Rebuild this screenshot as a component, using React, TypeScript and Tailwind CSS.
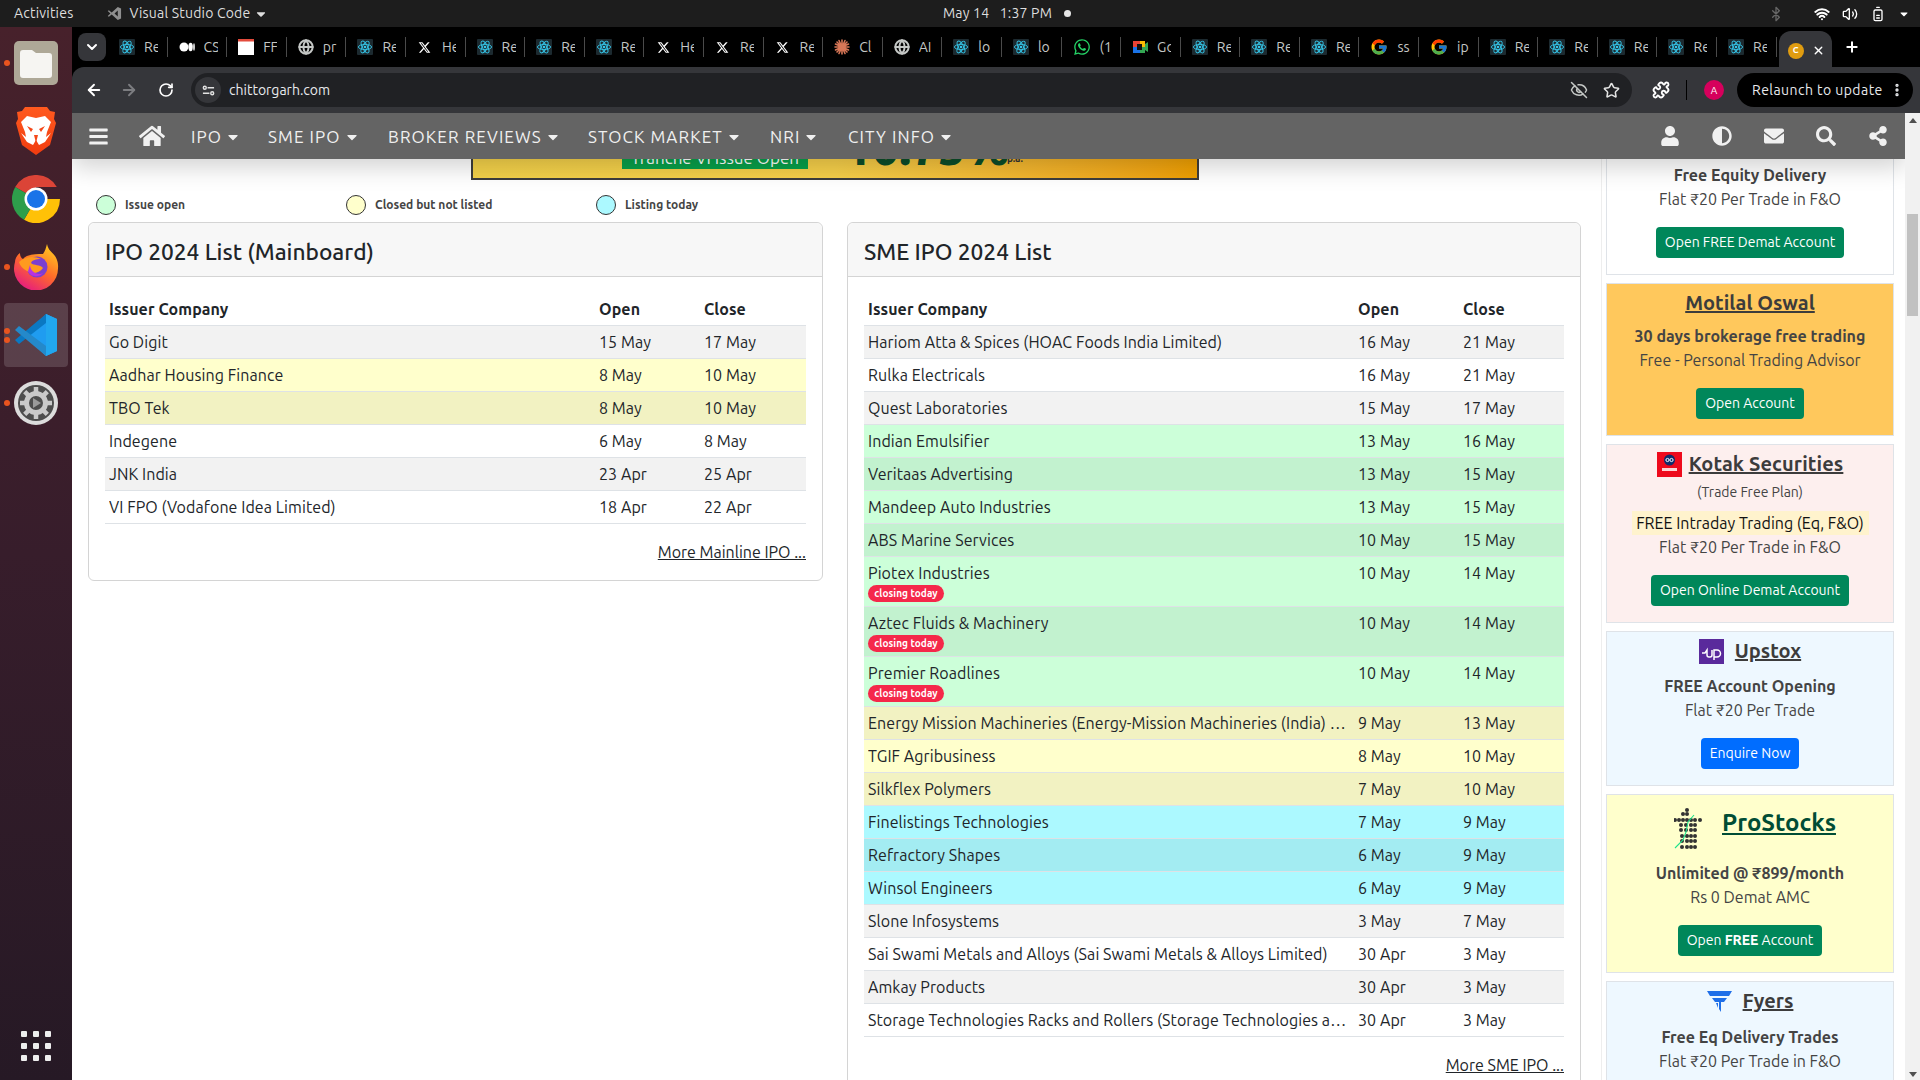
import React from 'react';
import {
  ArrowLeft, ArrowRight, RotateCw, EyeOff, Star, Puzzle, EllipsisVertical, ChevronDown, Plus, X,
  Wifi, Volume2, BatteryMedium, Bluetooth, Globe,
} from 'lucide-react';
import { FaBars, FaHome, FaUser, FaAdjust, FaEnvelope, FaSearch, FaShareAlt, FaCaretDown, FaWhatsapp } from 'react-icons/fa';
import { FcGoogle } from 'react-icons/fc';
import { FaXTwitter } from 'react-icons/fa6';

const FONT = "font-['Ubuntu','Lato','Noto_Sans',sans-serif]";

const ReactIcon = () => (
  <svg viewBox="0 0 16 16" className="w-4 h-4 shrink-0">
    <rect width="16" height="16" rx="1" fill="#1c2a30" />
    <g fill="none" stroke="#35c5e8" strokeWidth="0.9">
      <ellipse cx="8" cy="8" rx="6.6" ry="2.6" />
      <ellipse cx="8" cy="8" rx="6.6" ry="2.6" transform="rotate(60 8 8)" />
      <ellipse cx="8" cy="8" rx="6.6" ry="2.6" transform="rotate(120 8 8)" />
    </g>
    <circle cx="8" cy="8" r="1.3" fill="#35c5e8" />
  </svg>
);

const MediumIcon = () => (
  <svg viewBox="0 0 16 16" className="w-4 h-4 shrink-0" fill="#fff">
    <ellipse cx="5" cy="8" rx="4.5" ry="4.6" />
    <ellipse cx="11.6" cy="8" rx="2.2" ry="4.2" />
    <ellipse cx="15" cy="8" rx="0.8" ry="3.8" />
  </svg>
);

const CalendarIcon = () => (
  <svg viewBox="0 0 16 16" className="w-4 h-4 shrink-0">
    <rect width="16" height="16" fill="#fff" />
    <rect width="16" height="2.5" fill="#e34b3c" />
  </svg>
);

const ClaudeIcon = () => (
  <svg viewBox="0 0 16 16" className="w-4 h-4 shrink-0" stroke="#d97757" strokeWidth="1.6" strokeLinecap="round">
    <path d="M8 1v14M1 8h14M3 3l10 10M13 3L3 13M5 1.5l6 13M11 1.5l-6 13M1.5 5l13 6M14.5 5l-13 6" />
  </svg>
);

const MeetIcon = () => (
  <svg viewBox="0 0 16 16" className="w-4 h-4 shrink-0">
    <rect x="1" y="2" width="7" height="6" fill="#ea4335" />
    <rect x="8" y="2" width="5" height="6" fill="#fbbc04" />
    <rect x="1" y="8" width="7" height="6" fill="#1a73e8" />
    <rect x="8" y="8" width="5" height="6" fill="#34a853" />
    <rect x="5" y="5" width="5" height="6" fill="#111" />
    <path d="M13 5l3-2v10l-3-2z" fill="#34a853" />
  </svg>
);

type Fav = 'react' | 'medium' | 'cal' | 'globe' | 'x' | 'claude' | 'wa' | 'meet' | 'google';

const tabs: { icon: Fav; label: string }[] = [
  { icon: 'react', label: 'Re' }, { icon: 'medium', label: 'CS' }, { icon: 'cal', label: 'FF' }, { icon: 'globe', label: 'pr' },
  { icon: 'react', label: 'Re' }, { icon: 'x', label: 'He' }, { icon: 'react', label: 'Re' }, { icon: 'react', label: 'Re' },
  { icon: 'react', label: 'Re' }, { icon: 'x', label: 'He' }, { icon: 'x', label: 'Re' }, { icon: 'x', label: 'Re' },
  { icon: 'claude', label: 'Cl' }, { icon: 'globe', label: 'AI' }, { icon: 'react', label: 'lo' }, { icon: 'react', label: 'lo' },
  { icon: 'wa', label: '(1' }, { icon: 'meet', label: 'Go' }, { icon: 'react', label: 'Re' }, { icon: 'react', label: 'Re' },
  { icon: 'react', label: 'Re' }, { icon: 'google', label: 'ss' }, { icon: 'google', label: 'ip' }, { icon: 'react', label: 'Re' },
  { icon: 'react', label: 'Re' }, { icon: 'react', label: 'Re' }, { icon: 'react', label: 'Re' }, { icon: 'react', label: 'Re' },
];

const Favicon = ({ icon }: { icon: Fav }) => {
  if (icon === 'react') return <ReactIcon />;
  if (icon === 'medium') return <MediumIcon />;
  if (icon === 'cal') return <CalendarIcon />;
  if (icon === 'globe') return <Globe className="w-4 h-4 shrink-0 text-[#c4c7c5]" strokeWidth={3} />;
  if (icon === 'x') return <FaXTwitter className="w-[13px] h-[13px] mx-[1.5px] shrink-0 text-white" />;
  if (icon === 'claude') return <ClaudeIcon />;
  if (icon === 'wa') return <FaWhatsapp className="w-[18px] h-[18px] shrink-0 text-[#25d366]" />;
  if (icon === 'meet') return <MeetIcon />;
  return <FcGoogle className="w-[18px] h-[18px] shrink-0" />;
};

const FilesLogo = () => (
  <svg viewBox="0 0 44 44" className="w-11 h-11">
    <rect width="44" height="44" rx="5" fill="#aea897" />
    <path d="M6 12a3 3 0 013-3h9l4 3h13a3 3 0 013 3v19a3 3 0 01-3 3H9a3 3 0 01-3-3z" fill="#f6f5f2" />
  </svg>
);

const BraveLogo = () => (
  <svg viewBox="0 0 40 48" className="w-10 h-12">
    <defs>
      <linearGradient id="brv" x1="0" y1="0" x2="0" y2="1">
        <stop offset="0" stopColor="#ff5a1f" />
        <stop offset="1" stopColor="#f13c10" />
      </linearGradient>
    </defs>
    <path d="M9 0h22l3 4 5 1-1 7 2 4-6 22-14 10L6 38 0 16l2-4-1-7 5-1z" fill="url(#brv)" />
    <path d="M5 15l6-6 9 2 9-2 6 6-4 10-1 5 5-4-6 9-6 3-3-5-3 5-6-3-6-9 5 4-1-5z" fill="#fff" />
    <path d="M11 19l6 3-2 3zM29 19l-6 3 2 3zM18 28h4l-2 8z" fill="#f5481a" />
  </svg>
);

const ChromeLogo = () => (
  <svg viewBox="0 0 48 48" className="w-12 h-12">
    <path d="M24 24L3.2 12A24 24 0 0144.8 12H24z" fill="#db4437" />
    <path d="M24 24h24a24 24 0 01-36 20.8z" fill="#ffc107" />
    <path d="M24 24L12 44.8A24 24 0 013.2 12z" fill="#2e9e4b" />
    <circle cx="24" cy="24" r="11.5" fill="#fff" />
    <circle cx="24" cy="24" r="9" fill="#1a73e8" />
  </svg>
);

const FirefoxLogo = () => (
  <svg viewBox="0 0 46 46" className="w-[46px] h-[46px]">
    <defs>
      <linearGradient id="ffx" x1="0.8" y1="0" x2="0.2" y2="1">
        <stop offset="0" stopColor="#ffcb1f" />
        <stop offset="0.5" stopColor="#ff6a2a" />
        <stop offset="1" stopColor="#e31587" />
      </linearGradient>
    </defs>
    <path d="M34 0c1 6 5 8 8 12 4 6 3 12 3 12a22 22 0 11-43-6c0-3 2-7 5-9 0 3 1 5 3 6 4-5 14-5 20-5 2-3 3-6 4-10z" fill="url(#ffx)" />
    <circle cx="24" cy="23" r="10.5" fill="#7b3fd0" />
    <path d="M6 18c6-6 16-6 22-3-5 0-9 1-10 4 3 3 9 1 12 5-4 6-12 6-16 3-4-2-7-5-8-9z" fill="#ff9a1f" />
    <path d="M17 21a9 9 0 0013 8c-4 5-13 4-15-2z" fill="#b833e1" />
  </svg>
);

const VsCodeLogo = () => (
  <svg viewBox="0 0 44 44" className="w-11 h-11">
    <path d="M32 1l11 5v32l-11 5L12 24z" fill="#1f9cf0" />
    <path d="M32 1L1 27l4 4 27-21z" fill="#0a78c2" />
    <path d="M5 13l-4 4 31 26v-10z" fill="#2489ca" />
    <path d="M32 1l11 5v32l-11 5z" fill="#21a7ef" />
  </svg>
);

const SettingsLogo = () => (
  <svg viewBox="0 0 44 44" className="w-11 h-11">
    <circle cx="22" cy="22" r="22" fill="#dcdcdc" />
    <circle cx="22" cy="22" r="18" fill="#4d4d4d" />
    <circle cx="22" cy="22" r="9.5" fill="none" stroke="#c9c9c9" strokeWidth="5" />
    <path d="M22 6v6M22 32v6M6 22h6M32 22h6M10.7 10.7l4.2 4.2M29.1 29.1l4.2 4.2M33.3 10.7l-4.2 4.2M14.9 29.1l-4.2 4.2" stroke="#c9c9c9" strokeWidth="4.5" />
    <path d="M19 17l8 5-8 5z" fill="#9a9a9a" />
  </svg>
);

const Dot = () => <span className="w-[6px] h-[6px] rounded-full bg-[#e9541f]" />;

const DockItem = ({ dots = 0, active, h, children }: { dots?: number; active?: boolean; h: string; children: React.ReactNode }) => (
  <div className={`relative w-[72px] flex items-center justify-center ${h}`}>
    {active && <div className="absolute left-[4px] right-[4px] inset-y-0 rounded bg-white/15" />}
    <div className="absolute left-[4px] top-0 bottom-0 flex flex-col justify-center gap-[3px]">
      {Array.from({ length: dots }).map((_, i) => <Dot key={i} />)}
    </div>
    <div className="relative flex">{children}</div>
  </div>
);

const Dock = () => (
  <aside className="w-[72px] shrink-0 flex flex-col items-center pt-[4px] bg-gradient-to-b from-[#47212b] via-[#371d2b] to-[#261925]">
    <DockItem dots={1} h="h-[64px]"><FilesLogo /></DockItem>
    <DockItem h="h-[72px]"><BraveLogo /></DockItem>
    <DockItem h="h-[64px]"><ChromeLogo /></DockItem>
    <DockItem dots={1} h="h-[72px]"><FirefoxLogo /></DockItem>
    <DockItem dots={2} active h="h-[64px]"><VsCodeLogo /></DockItem>
    <DockItem dots={1} h="h-[72px]"><SettingsLogo /></DockItem>
    <div className="mt-auto mb-[19px] grid grid-cols-3 gap-[6px]">
      {Array.from({ length: 9 }).map((_, i) => <span key={i} className="w-[6px] h-[6px] rounded-[1px] bg-[#eeeeee]" />)}
    </div>
  </aside>
);

const TopBar = () => (
  <header className="h-[27px] shrink-0 bg-[#1d1d1d] text-[#dedede] text-[14px] tracking-[0.2px] flex items-center relative">
    <span className="ml-[14px]">Activities</span>
    <svg viewBox="0 0 16 16" className="w-[15px] h-[15px] ml-[34px]" fill="#8f8f8f">
      <path d="M11.5 1L15 2.6v10.8L11.5 15 5 9l-3 2.4L.8 10.6 3.6 8 .8 5.4 2 4.6 5 7zM11.5 4.8L8 8l3.5 3.2z" />
    </svg>
    <span className="ml-[7px]">Visual Studio Code</span>
    <FaCaretDown className="ml-[4px] w-[14px] h-[14px]" />
    <div className="absolute left-[943px] flex items-center">
      <span className="w-[109px] flex justify-between"><span>May 14</span><span>1:37 PM</span></span>
      <span className="ml-[12px] w-[7px] h-[7px] rounded-full bg-[#e6e6e6]" />
    </div>
    <div className="ml-auto flex items-center gap-[12px] pr-[10px]">
      <Bluetooth className="w-4 h-4 text-[#666] mr-[18px]" />
      <Wifi className="w-4 h-4 text-white" strokeWidth={3} />
      <Volume2 className="w-4 h-4 text-white" />
      <BatteryMedium className="w-4 h-4 text-white -rotate-90" />
      <FaCaretDown className="w-3 h-3 text-white" />
    </div>
  </header>
);

const TabStrip = () => (
  <div className="h-[40px] shrink-0 bg-black flex items-center pl-[6px] text-[#c4c7c5] text-[14px]">
    <div className="w-[28px] h-[28px] rounded-lg bg-[#35363a] flex items-center justify-center mr-[2px]">
      <ChevronDown className="w-4 h-4 text-white" strokeWidth={3} />
    </div>
    {tabs.map((t, i) => (
      <div key={i} className="w-[59.6px] h-[20px] shrink-0 flex items-center pl-[11px] border-r border-[#4a4a4a]">
        <Favicon icon={t.icon} />
        <span className="ml-[9px] w-[14px] overflow-hidden whitespace-nowrap">{t.label}</span>
      </div>
    ))}
    <div className="ml-[2px] w-[53px] h-[40px] mt-[7px] rounded-t-xl bg-[#35363a] flex items-center justify-center gap-[8px] pl-[2px]">
      <span className="w-4 h-4 rounded-full bg-[#e09c10] text-white text-[9px] font-bold flex items-center justify-center">C</span>
      <X className="w-[13px] h-[13px] text-white" strokeWidth={2.5} />
    </div>
    <Plus className="ml-[12px] w-4 h-4 text-white" strokeWidth={3} />
  </div>
);

const Toolbar = () => (
  <div className="h-[46px] shrink-0 bg-[#35363a] rounded-tl-xl flex items-center text-white pl-[13px] pr-[6px]">
    <ArrowLeft className="w-[18px] h-[18px]" strokeWidth={2.5} />
    <ArrowRight className="w-[18px] h-[18px] ml-[17px] text-[#7c7d80]" strokeWidth={2.5} />
    <RotateCw className="w-[16px] h-[16px] ml-[20px]" strokeWidth={2.5} />
    <div className="ml-[17px] w-[1441px] h-[34px] rounded-full bg-[#202124] flex items-center pl-[4px] pr-[12px]">
      <span className="w-[26px] h-[26px] rounded-full bg-[#35363a] flex items-center justify-center">
        <svg viewBox="0 0 14 14" className="w-[13px] h-[13px]" fill="none" stroke="#e3e3e3" strokeWidth="1.5">
          <circle cx="3" cy="4" r="1.6" /><path d="M6 4h7M1 10h7" /><circle cx="11" cy="10" r="1.6" />
        </svg>
      </span>
      <span className="ml-[8px] text-[14px] text-[#e8eaed]">chittorgarh.com</span>
      <EyeOff className="ml-auto w-[18px] h-[18px] text-[#c4c7c5]" />
      <Star className="ml-[15px] w-[17px] h-[17px] text-[#e3e3e3]" strokeWidth={2.2} />
    </div>
    <Puzzle className="ml-[20px] w-[18px] h-[18px]" strokeWidth={2.5} />
    <span className="ml-[16px] w-px h-[20px] bg-black" />
    <span className="ml-[17px] w-[20px] h-[20px] rounded-full bg-[#d6005c] text-[10px] flex items-center justify-center">A</span>
    <div className="ml-[13px] w-[176px] h-[34px] rounded-full bg-black flex items-center pl-[15px] text-[14px] tracking-[0.45px] text-[#e8eaed]">
      <span>Relaunch to update</span>
      <EllipsisVertical className="ml-auto mr-[8px] w-4 h-4" strokeWidth={3} />
    </div>
  </div>
);

const navItems = [
  { label: 'IPO', w: 'w-[77px]' },
  { label: 'SME IPO', w: 'w-[120px]' },
  { label: 'BROKER REVIEWS', w: 'w-[200px]' },
  { label: 'STOCK MARKET', w: 'w-[182px]' },
  { label: 'NRI', w: 'w-[78px]' },
  { label: 'CITY INFO', w: 'w-[110px]' },
];

const NavBar = () => (
  <nav className="h-[46px] shrink-0 bg-[#646464] text-[#f0f0f0] flex items-center relative z-10 shadow-[0_8px_24px_rgba(0,0,0,0.18)]">
    <FaBars className="ml-[16px] w-[21px] h-[21px]" />
    <FaHome className="ml-[30px] w-[26px] h-[26px]" />
    <div className="ml-[26px] flex items-center pt-[1px]">
      {navItems.map(n => (
        <div key={n.label} className={`${n.w} flex items-center text-[17px] tracking-[1.1px]`}>
          <span className="whitespace-nowrap">{n.label}</span>
          <FaCaretDown className="ml-[3px] w-[16px] h-[16px]" />
        </div>
      ))}
    </div>
    <div className="ml-auto flex items-center gap-[32px] pr-[17px]">
      <FaUser className="w-5 h-5" />
      <FaAdjust className="w-5 h-5" />
      <FaEnvelope className="w-5 h-5" />
      <FaSearch className="w-5 h-5" />
      <FaShareAlt className="w-5 h-5" />
    </div>
  </nav>
);

type Row = { name: string; open: string; close: string; bg: string; closing?: boolean };

const G1 = 'bg-[#f2f2f2]', W = 'bg-white', GR = 'bg-[#ccffd9]', GR2 = 'bg-[#c2f2cf]', Y = 'bg-[#ffffcc]', Y2 = 'bg-[#f2f2c2]', C = 'bg-[#acf9ff]', C2 = 'bg-[#a3ecf2]';

const mainRows: Row[] = [
  { name: 'Go Digit', open: '15 May', close: '17 May', bg: G1 },
  { name: 'Aadhar Housing Finance', open: '8 May', close: '10 May', bg: Y },
  { name: 'TBO Tek', open: '8 May', close: '10 May', bg: Y2 },
  { name: 'Indegene', open: '6 May', close: '8 May', bg: W },
  { name: 'JNK India', open: '23 Apr', close: '25 Apr', bg: G1 },
  { name: 'VI FPO (Vodafone Idea Limited)', open: '18 Apr', close: '22 Apr', bg: W },
];

const smeRows: Row[] = [
  { name: 'Hariom Atta & Spices (HOAC Foods India Limited)', open: '16 May', close: '21 May', bg: G1 },
  { name: 'Rulka Electricals', open: '16 May', close: '21 May', bg: W },
  { name: 'Quest Laboratories', open: '15 May', close: '17 May', bg: G1 },
  { name: 'Indian Emulsifier', open: '13 May', close: '16 May', bg: GR },
  { name: 'Veritaas Advertising', open: '13 May', close: '15 May', bg: GR2 },
  { name: 'Mandeep Auto Industries', open: '13 May', close: '15 May', bg: GR },
  { name: 'ABS Marine Services', open: '10 May', close: '15 May', bg: GR2 },
  { name: 'Piotex Industries', open: '10 May', close: '14 May', bg: GR, closing: true },
  { name: 'Aztec Fluids & Machinery', open: '10 May', close: '14 May', bg: GR2, closing: true },
  { name: 'Premier Roadlines', open: '10 May', close: '14 May', bg: GR, closing: true },
  { name: 'Energy Mission Machineries (Energy-Mission Machineries (India) Limited)', open: '9 May', close: '13 May', bg: Y2 },
  { name: 'TGIF Agribusiness', open: '8 May', close: '10 May', bg: Y },
  { name: 'Silkflex Polymers', open: '7 May', close: '10 May', bg: Y2 },
  { name: 'Finelistings Technologies', open: '7 May', close: '9 May', bg: C },
  { name: 'Refractory Shapes', open: '6 May', close: '9 May', bg: C2 },
  { name: 'Winsol Engineers', open: '6 May', close: '9 May', bg: C },
  { name: 'Slone Infosystems', open: '3 May', close: '7 May', bg: G1 },
  { name: 'Sai Swami Metals and Alloys (Sai Swami Metals & Alloys Limited)', open: '30 Apr', close: '3 May', bg: W },
  { name: 'Amkay Products', open: '30 Apr', close: '3 May', bg: G1 },
  { name: 'Storage Technologies Racks and Rollers (Storage Technologies and Rollers Limited)', open: '30 Apr', close: '3 May', bg: W },
];

const IpoTable = ({ rows }: { rows: Row[] }) => (
  <table className="w-full table-fixed border-collapse text-[16px] tracking-[0.08px] text-[#212529]">
    <thead>
      <tr className="h-[33px] border-b border-[#dee2e6] font-bold">
        <th className="w-[490px] px-[4px] pt-[2px] text-left">Issuer Company</th>
        <th className="w-[105px] px-[4px] pt-[2px] text-left">Open</th>
        <th className="px-[4px] pt-[2px] text-left">Close</th>
      </tr>
    </thead>
    <tbody>
      {rows.map(r => (
        <tr key={r.name} className={`${r.closing ? 'h-[50px]' : 'h-[33px]'} border-b border-[#dee2e6] ${r.bg}`}>
          <td className={`px-[4px] ${r.closing ? 'align-top pt-[4px]' : ''}`}>
            <div className="truncate leading-[24px]">{r.name}</div>
            {r.closing && (
              <div className="flex">
                <span className="h-[17px] w-[76px] rounded-full bg-[#f5284a] text-white text-[10px] font-bold flex items-center justify-center">closing today</span>
              </div>
            )}
          </td>
          <td className={`px-[4px] ${r.closing ? 'align-top pt-[4px]' : ''}`}>{r.open}</td>
          <td className={`px-[4px] ${r.closing ? 'align-top pt-[4px]' : ''}`}>{r.close}</td>
        </tr>
      ))}
    </tbody>
  </table>
);

const IpoCard = ({ title, rows, more, width }: { title: string; rows: Row[]; more: string; width: string }) => (
  <section className={`${width} border border-[#d4d4d4] rounded-md bg-white`}>
    <div className="h-[54px] flex items-center pt-[5px] px-[16px] bg-[#f7f7f7] border-b border-[#d4d4d4] rounded-t-md">
      <h2 className="text-[22.7px] font-medium text-[#212529]">{title}</h2>
    </div>
    <div className="px-[16px] pt-[15px] pb-[16px]">
      <IpoTable rows={rows} />
      <div className="flex justify-end mt-[16px] h-[24px] items-center">
        <a className="underline text-[#212529] text-[16px]">{more}</a>
      </div>
    </div>
  </section>
);

const Legend = ({ color, label }: { color: string; label: string }) => (
  <div className="w-[250px] pl-[8px] flex items-center gap-[9px]">
    <span className={`w-[20px] h-[20px] rounded-full border border-[#333] ${color}`} />
    <span className="text-[12px] font-bold text-[#444]">{label}</span>
  </div>
);

const Banner = () => (
  <div className="ml-[399px] w-[728px] h-[21px] border-x-2 border-b-2 border-[#3d3d3d] relative overflow-hidden bg-gradient-to-r from-[#f4d24a] via-[#f7d04a] to-[#f0a000]">
    <div className="absolute left-[149px] top-[-12px] w-[186px] h-[22px] bg-[#07a04a] text-white text-[17px] flex items-center justify-center whitespace-nowrap">Tranche VI Issue Open</div>
    <div className="absolute left-[372px] top-[-36px] text-[#0b4d2a] text-[48px] font-black leading-[48px] whitespace-nowrap">10.75%</div>
    <div className="absolute left-[534px] top-[-5px] text-[#333] text-[10px] font-bold leading-[10px]">p.a.</div>
  </div>
);

const GreenBtn = ({ children }: { children: React.ReactNode }) => (
  <span className="inline-flex h-[31px] items-center px-[9px] pb-[2px] rounded bg-[#00875a] text-white text-[14px]">{children}</span>
);

const Broker = ({ bg, className = '', children }: { bg: string; className?: string; children: React.ReactNode }) => (
  <div className={`border border-[#dfe3e8] flex flex-col items-center text-center text-[16px] leading-[24px] text-[#444] ${bg} ${className}`}>
    {children}
  </div>
);

const Heading = ({ className = '', children }: { className?: string; children: React.ReactNode }) => (
  <a className={`text-[20px] leading-[30px] font-bold underline text-[#3c3c3c] ${className}`}>{children}</a>
);

const Sidebar = () => (
  <aside className="w-[288px] flex flex-col gap-[8px]">
    <Broker bg="bg-white" className="border-t-0 pt-[4px] pb-[16px]">
      <b>Free Equity Delivery</b>
      <span>Flat ₹20 Per Trade in F&amp;O</span>
      <div className="mt-[16px] flex"><GreenBtn>Open FREE Demat Account</GreenBtn></div>
    </Broker>
    <Broker bg="bg-[#ffc85c]" className="pt-[4px] pb-[16px]">
      <Heading>Motilal Oswal</Heading>
      <b className="mt-[6px]">30 days brokerage free trading</b>
      <span>Free - Personal Trading Advisor</span>
      <div className="mt-[16px] flex"><GreenBtn>Open Account</GreenBtn></div>
    </Broker>
    <Broker bg="bg-[#fdefee]" className="pt-[4px] pb-[16px]">
      <div className="flex items-center gap-[7px] h-[30px]">
        <svg viewBox="0 0 25 25" className="w-[25px] h-[25px]">
          <rect width="25" height="25" fill="#ee0a1c" />
          <circle cx="12.5" cy="8" r="5.5" fill="#0d2c6c" />
          <circle cx="10.5" cy="8" r="1.6" fill="none" stroke="#fff" strokeWidth="1" />
          <circle cx="14.5" cy="8" r="1.6" fill="none" stroke="#fff" strokeWidth="1" />
          <rect x="5" y="16" width="15" height="3" fill="#ffd5d5" />
        </svg>
        <Heading className="tracking-[0.1px]">Kotak Securities</Heading>
      </div>
      <span className="text-[14px] mt-[1px]">(Trade Free Plan)</span>
      <span className="mt-[7px] px-[4px] bg-[#fff3cd] text-[#111] w-[237px]">FREE Intraday Trading (Eq, F&amp;O)</span>
      <span>Flat ₹20 Per Trade in F&amp;O</span>
      <div className="mt-[16px] flex"><GreenBtn>Open Online Demat Account</GreenBtn></div>
    </Broker>
    <Broker bg="bg-[#eef8ff]" className="pt-[4px] pb-[16px]">
      <div className="flex items-center gap-[11px] h-[30px]">
        <svg viewBox="0 0 25 25" className="w-[25px] h-[25px]">
          <rect width="25" height="25" fill="#5a2a9c" />
          <path d="M3 14h3l2-3v5a2 2 0 002 2h1a2 2 0 002-2v-5M15 21V11h3a3 3 0 010 7h-3" fill="none" stroke="#fff" strokeWidth="1.5" />
        </svg>
        <Heading>Upstox</Heading>
      </div>
      <b className="mt-[8px]">FREE Account Opening</b>
      <span>Flat ₹20 Per Trade</span>
      <div className="mt-[16px] flex">
        <span className="inline-flex h-[31px] items-center px-[9px] pb-[2px] rounded bg-[#006dff] text-white text-[14px]">Enquire Now</span>
      </div>
    </Broker>
    <Broker bg="bg-[#ffffcc]" className="pt-[13px] pb-[16px]">
      <div className="flex items-start gap-[20px] h-[42px] pl-[10px]">
        <svg viewBox="0 0 28 42" className="w-[28px] h-[42px]" fill="#333">
          {[[13, 2], [9, 6], [13, 6], [1, 12], [5, 12], [9, 12], [13, 12], [17, 12], [21, 12], [26, 12], [7, 17], [12, 17], [17, 17], [21, 17], [7, 22], [12, 22], [17, 22], [21, 22], [8, 28], [13, 28], [17, 28], [21, 28], [8, 33], [13, 33], [17, 33], [21, 33], [8, 39], [13, 39], [17, 39], [21, 39]].map(([x, y]) => (
            <circle key={`${x}-${y}`} cx={x} cy={y} r="2" />
          ))}
          <path d="M1 40l8-8 3-8 2-10 6-7" fill="none" stroke="#1de28a" strokeWidth="1.1" />
        </svg>
        <Heading className="text-[24px] !text-[#004d35]">ProStocks</Heading>
      </div>
      <b className="mt-[11px]">Unlimited @ ₹899/month</b>
      <span>Rs 0 Demat AMC</span>
      <div className="mt-[16px] flex"><GreenBtn>Open&nbsp;<b>FREE</b>&nbsp;Account</GreenBtn></div>
    </Broker>
    <Broker bg="bg-[#eef8ff]" className="pt-[4px] pb-[16px]">
      <div className="flex items-center gap-[11px] h-[30px]">
        <svg viewBox="0 0 25 22" className="w-[25px] h-[22px]" fill="#1f6fe8">
          <path d="M0 1h25l-3 5H3zM5 8h15l-3 4h-3v10l-2-3V12H8zM9 13h2v5z" />
        </svg>
        <Heading>Fyers</Heading>
      </div>
      <b className="mt-[9px]">Free Eq Delivery Trades</b>
      <span>Flat ₹20 Per Trade in F&amp;O</span>
      <div className="mt-[16px] flex"><GreenBtn>Open Account</GreenBtn></div>
    </Broker>
  </aside>
);

const Scrollbar = () => (
  <div className="w-[15px] shrink-0 bg-[#f1f1f1] flex flex-col items-center relative">
    <div className="mt-[5px] w-0 h-0 border-x-[4px] border-x-transparent border-b-[5px] border-b-[#505050]" />
    <div className="mt-[91px] w-[11px] h-[102px] bg-[#c1c1c1]" />
    <div className="mt-auto mb-[3px] w-0 h-0 border-x-[4px] border-x-transparent border-t-[5px] border-t-[#505050]" />
  </div>
);

const App = () => (
  <div className={`w-[1920px] h-[1080px] overflow-hidden flex flex-col bg-white ${FONT}`}>
    <TopBar />
    <div className="flex flex-1 min-h-0">
      <Dock />
      <div className="flex-1 min-w-0 flex flex-col bg-black">
        <TabStrip />
        <Toolbar />
        <div className="flex flex-1 min-h-0 bg-white">
          <div className="flex-1 min-w-0 flex flex-col overflow-hidden">
            <NavBar />
            <div className="flex flex-1 min-h-0 overflow-hidden">
              <div className="w-[1529px] shrink-0">
                <Banner />
                <div className="flex ml-[16px] h-[42px] pt-[7px] items-center"><Legend color="bg-[#ccffd9]" label="Issue open" /><Legend color="bg-[#ffffcc]" label="Closed but not listed" /><Legend color="bg-[#acf9ff]" label="Listing today" /></div>
                <div className="flex items-start gap-[24px] ml-[16px]">
                  <IpoCard title="IPO 2024 List (Mainboard)" rows={mainRows} more="More Mainline IPO ..." width="w-[735px]" />
                  <IpoCard title="SME IPO 2024 List" rows={smeRows} more="More SME IPO ..." width="w-[734px]" />
                </div>
              </div>
              <div className="pl-[4px] border-l border-[#eeeeee] h-[1100px]">
                <Sidebar />
              </div>
            </div>
          </div>
          <Scrollbar />
        </div>
      </div>
    </div>
  </div>
);

export default App;
